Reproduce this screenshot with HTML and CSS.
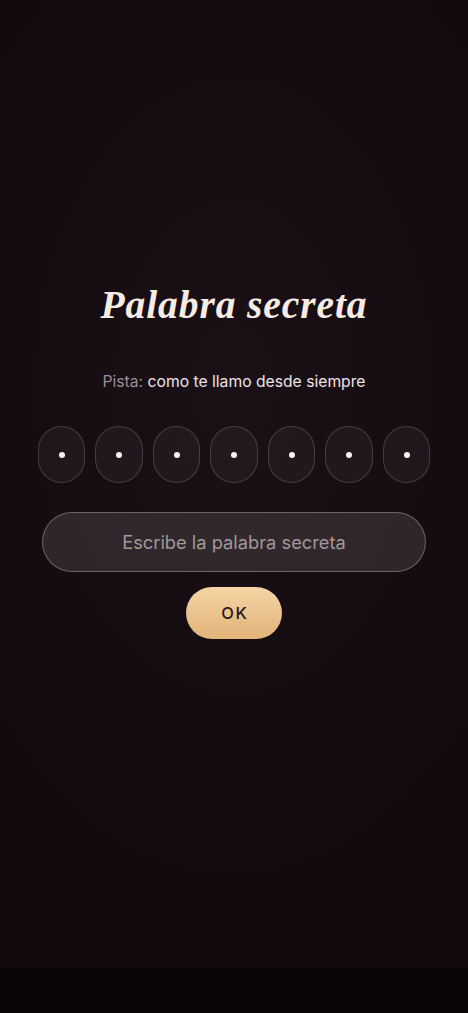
FILE: index.html
```html
<!DOCTYPE html>
<html lang="es">
<head>
<meta charset="utf-8">
<meta name="viewport" content="width=device-width, initial-scale=1">
<title>Palabra secreta</title>
<link rel="stylesheet" href="styles.css">
</head>
<body>
<main class="screen">
  <h1 class="title">Palabra secreta</h1>
  <p class="hint"><span class="hint-label">Pista:</span> como te llamo desde siempre</p>
  <div class="pins">
    <div class="pin"><span class="dot"></span></div>
    <div class="pin"><span class="dot"></span></div>
    <div class="pin"><span class="dot"></span></div>
    <div class="pin"><span class="dot"></span></div>
    <div class="pin"><span class="dot"></span></div>
    <div class="pin"><span class="dot"></span></div>
    <div class="pin"><span class="dot"></span></div>
  </div>
  <input class="field" type="text" placeholder="Escribe la palabra secreta">
  <button class="ok" type="button">OK</button>
</main>
<div class="navbar"></div>
</body>
</html>
```

FILE: styles.css
```css
* { box-sizing: border-box; }
html, body {
  margin: 0;
  padding: 0;
  height: 1013px;
  background: #140b10;
  overflow: hidden;
}
body {
  display: flex;
  flex-direction: column;
  font-family: Inter, "Noto Sans", sans-serif;
}
.screen {
  height: 968px;
  display: flex;
  flex-direction: column;
  align-items: center;
  padding-top: 283px;
  background:
    radial-gradient(ellipse 80% 60% at 50% 40%, #1a1015 0%, #150c11 60%, #120a0e 100%);
}
.title {
  margin: 0;
  font-family: "Liberation Serif", "DejaVu Serif", serif;
  font-style: italic;
  font-weight: 700;
  font-size: 39.5px;
  line-height: 44px;
  color: #f6ece4;
  letter-spacing: 0.9px;
}
.hint {
  margin: 43px 0 0;
  font-size: 15.7px;
  line-height: 24px;
  color: #ece4e6;
}
.hint-label {
  color: #9a8f94;
}
.pins {
  margin-top: 32px;
  display: flex;
  gap: 10px;
}
.pin {
  width: 47.5px;
  height: 57px;
  border-radius: 50% / 42%;
  border: 1px solid rgba(255, 255, 255, 0.16);
  background: rgba(255, 255, 255, 0.045);
  display: flex;
  align-items: center;
  justify-content: center;
}
.dot {
  width: 6px;
  height: 6px;
  border-radius: 50%;
  background: #fbf3ee;
}
.field {
  margin-top: 29px;
  width: 384px;
  height: 60px;
  border-radius: 30px;
  border: 1px solid rgba(255, 255, 255, 0.28);
  background: rgba(255, 255, 255, 0.11);
  color: #efe6e8;
  font-family: Inter, "Noto Sans", sans-serif;
  font-size: 18.3px;
  text-align: center;
  outline: none;
}
.field::placeholder {
  color: #a2979b;
}
.ok {
  margin-top: 15px;
  width: 96px;
  height: 52px;
  border: none;
  border-radius: 26px;
  background: linear-gradient(180deg, #f4d5a6 0%, #e9c08a 60%, #e2b479 100%);
  color: #2a1715;
  font-family: Inter, "Noto Sans", sans-serif;
  font-size: 16.5px;
  font-weight: 500;
  letter-spacing: 1.5px;
  padding: 0 0 0 1.5px;
}
.navbar {
  height: 45px;
  background: #0a0606;
}
```
